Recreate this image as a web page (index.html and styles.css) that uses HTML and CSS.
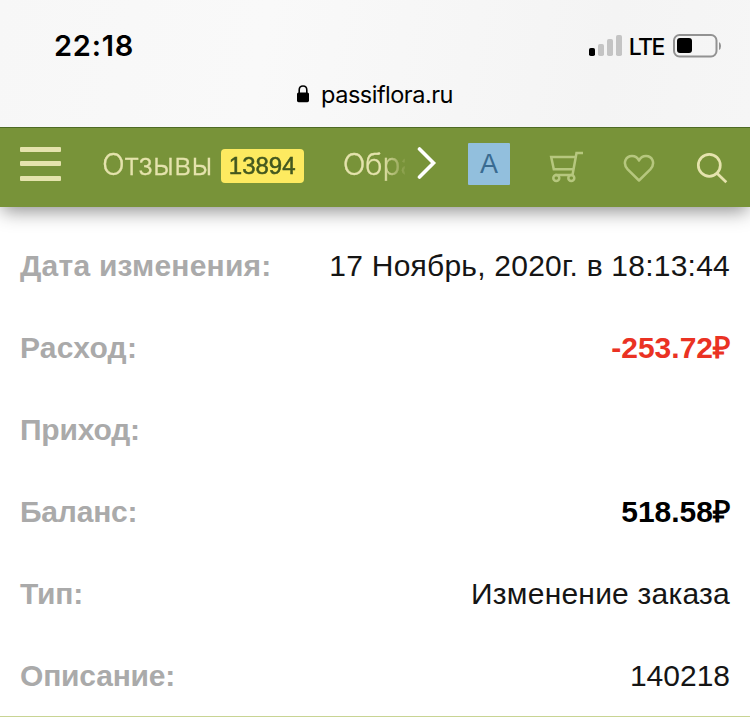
FILE: index.html
```html
<!DOCTYPE html>
<html lang="ru">
<head>
  <meta charset="UTF-8" />
  <meta name="viewport" content="width=device-width, initial-scale=1.0" />
  <title>passiflora.ru</title>
  <link rel="stylesheet" href="styles.css">
</head>
<body>

  <div class="browser-bar">
    <div class="status">
      <span class="time">22:18</span>
      <div class="status-right">
        <svg class="signal" width="33" height="22" viewBox="0 0 33 22">
          <rect x="0" y="13" width="6" height="8" rx="1.8" fill="#000" />
          <rect x="9" y="9" width="6" height="12" rx="1.8" fill="#c4c4c4" />
          <rect x="18" y="4" width="6" height="17" rx="1.8" fill="#c4c4c4" />
          <rect x="27" y="0" width="6" height="21" rx="1.8" fill="#c4c4c4" />
        </svg>
        <span class="network">LTE</span>
        <svg class="battery" width="49" height="24" viewBox="0 0 49 24">
          <rect x="1" y="1" width="42.5" height="21.5" rx="5.5" fill="none" stroke="#929292" stroke-width="2" />
          <rect x="4" y="4" width="15" height="15" rx="3" fill="#000" />
          <path d="M46 8 Q48 9 48 12 Q48 15 46 16 Z" fill="#929292" />
        </svg>
      </div>
    </div>
    <div class="address">
      <svg class="lock" width="12" height="18" viewBox="0 0 12 18">
        <path d="M2.2 9 V5 Q2.2 1 6 1 Q9.8 1 9.8 5 V9" fill="none" stroke="#000" stroke-width="1.6" />
        <rect x="0" y="7.5" width="12" height="9.7" rx="1.6" fill="#000" />
      </svg>
      <span class="host">passiflora.ru</span>
    </div>
  </div>

  <header class="header">
    <button class="burger" aria-label="Меню"><i></i><i></i><i></i></button>
    <nav class="nav">
      <a class="nav-link" href="#">Отзывы</a>
      <span class="badge">13894</span>
      <a class="nav-link nav-next" href="#">Обра</a>
    </nav>
    <svg class="arrow" width="20" height="34" viewBox="0 0 20 34">
      <path d="M2.5 3 L16.5 17 L2.5 31" fill="none" stroke="#fff" stroke-width="3.6" stroke-linecap="round" />
    </svg>
    <a class="avatar" href="#">А</a>
    <svg class="cart" width="36" height="32" viewBox="0 0 36 32" fill="none" stroke="#b6c77e" stroke-width="2.5">
      <path d="M34 2 H27.5 L23.5 24 H6" />
      <path d="M26 6 H2.2 L4.8 18.2 H24" />
      <circle cx="7.3" cy="27" r="3" />
      <circle cx="22.3" cy="27" r="3" />
    </svg>
    <svg class="heart" width="32" height="28" viewBox="0 0 32 28" fill="none" stroke="#b6c77e" stroke-width="2.5" stroke-linejoin="round">
      <path d="M16 26.5 L4.7 15.4 C-1 9 3 2 9 2 C12.5 2 14.8 4 16 6.6 C17.2 4 19.5 2 23 2 C29 2 33 9 27.3 15.4 Z" />
    </svg>
    <svg class="search" width="32" height="32" viewBox="0 0 32 32" fill="none" stroke="#e5e3ad" stroke-width="2.7">
      <circle cx="13.3" cy="13.3" r="11" />
      <path d="M21 21.2 L30.3 30.3" />
    </svg>
  </header>

  <main class="details">
    <div class="row">
      <span class="label wide">Дата изменения:</span>
      <span class="value wide">17 Ноябрь, 2020г. в 18:13:44</span>
    </div>
    <div class="row">
      <span class="label wide">Расход:</span>
      <span class="value money minus">-253.72₽</span>
    </div>
    <div class="row">
      <span class="label">Приход:</span>
      <span class="value"></span>
    </div>
    <div class="row">
      <span class="label">Баланс:</span>
      <span class="value money">518.58₽</span>
    </div>
    <div class="row">
      <span class="label">Тип:</span>
      <span class="value wide">Изменение заказа</span>
    </div>
    <div class="row">
      <span class="label">Описание:</span>
      <span class="value">140218</span>
    </div>
  </main>

</body>
</html>
```

FILE: styles.css
```css
* {
  margin: 0;
  padding: 0;
  box-sizing: border-box;
}

body {
  width: 750px;
  height: 717px;
  background-color: #fff;
  font-family: "Liberation Sans", Arial, sans-serif;
  overflow: hidden;
}

a {
  text-decoration: none;
}

svg {
  display: block;
  flex: none;
}

.browser-bar {
  position: relative;
  z-index: 1;
  height: 128px;
  background: linear-gradient(100deg, #f7f7f7, #f9f9f9 35%, #f4f4f4 80%, #f6f6f6);
  border-bottom: 1px solid #4e6b25;
  font-family: Inter, sans-serif;
  color: #000;
}

.status {
  height: 71px;
  padding: 20px 28px 0 54px;
  display: flex;
  justify-content: space-between;
  align-items: center;
}

.time {
  font-size: 29px;
  font-weight: 600;
  letter-spacing: 0.8px;
}

.status-right {
  display: flex;
  align-items: center;
}

.network {
  margin: 2px 9px 0 7px;
  font-size: 23px;
  font-weight: 500;
  letter-spacing: -1.5px;
}

.address {
  height: 46px;
  display: flex;
  justify-content: center;
  align-items: center;
}

.lock {
  margin-right: 12px;
}

.host {
  font-size: 23.5px;
  letter-spacing: -0.5px;
}

.header {
  height: 79px;
  padding: 0 22px 0 20px;
  display: flex;
  align-items: center;
  background-color: #789339;
  box-shadow: 0 6px 18px -2px rgba(0, 0, 0, 0.45);
}

.burger {
  width: 41px;
  height: 34px;
  margin-bottom: 8px;
  display: flex;
  flex-direction: column;
  justify-content: space-between;
  background: none;
  border: none;
}

.burger i {
  height: 5px;
  border-radius: 1px;
  background-color: #e5e3ad;
}

.nav {
  width: 303px;
  height: 40px;
  margin: 0 0 4px 41px;
  display: flex;
  align-items: center;
  overflow: hidden;
  -webkit-mask-image: linear-gradient(90deg, #000 280px, transparent 306px);
  mask-image: linear-gradient(90deg, #000 280px, transparent 306px);
}

.nav-link {
  flex: none;
  margin-top: -3px;
  font-family: Inter, sans-serif;
  font-size: 30px;
  font-weight: 300;
  letter-spacing: 0.3px;
  -webkit-text-stroke: 0.3px #e5e3ad;
  color: #e5e3ad;
}

.nav-next {
  letter-spacing: -0.3px;
}

.badge {
  flex: none;
  width: 83px;
  height: 34px;
  margin: 0 39px 0 8px;
  border-radius: 4px;
  background-color: #fdea60;
  color: #43581f;
  font-size: 24px;
  -webkit-text-stroke: 0.5px #43581f;
  line-height: 33px;
  text-align: center;
}

.arrow {
  margin: 0 0 9px 12px;
}

.avatar {
  width: 42px;
  height: 42px;
  margin: 0 0 7px 31px;
  border-radius: 1px;
  background-color: #92bfdd;
  color: #396b91;
  font-size: 27px;
  line-height: 42px;
  text-align: center;
}

.cart {
  margin: 0 0 1px 39px;
}

.heart {
  margin-left: 38px;
}

.search {
  margin-left: auto;
}

.details {
  height: 510px;
  padding-top: 18px;
  border-bottom: 1px solid #c8d494;
}

.row {
  height: 82px;
  padding: 0 20px;
  display: flex;
  justify-content: space-between;
  align-items: center;
  font-size: 30px;
  line-height: 34px;
  color: #151515;
}

.label {
  color: #aaa;
  font-weight: bold;
  letter-spacing: -0.2px;
}

.wide {
  letter-spacing: 0.23px;
}

.money {
  height: 34px;
  color: #000;
  font-weight: bold;
}

.minus {
  color: #ea3223;
}
```
